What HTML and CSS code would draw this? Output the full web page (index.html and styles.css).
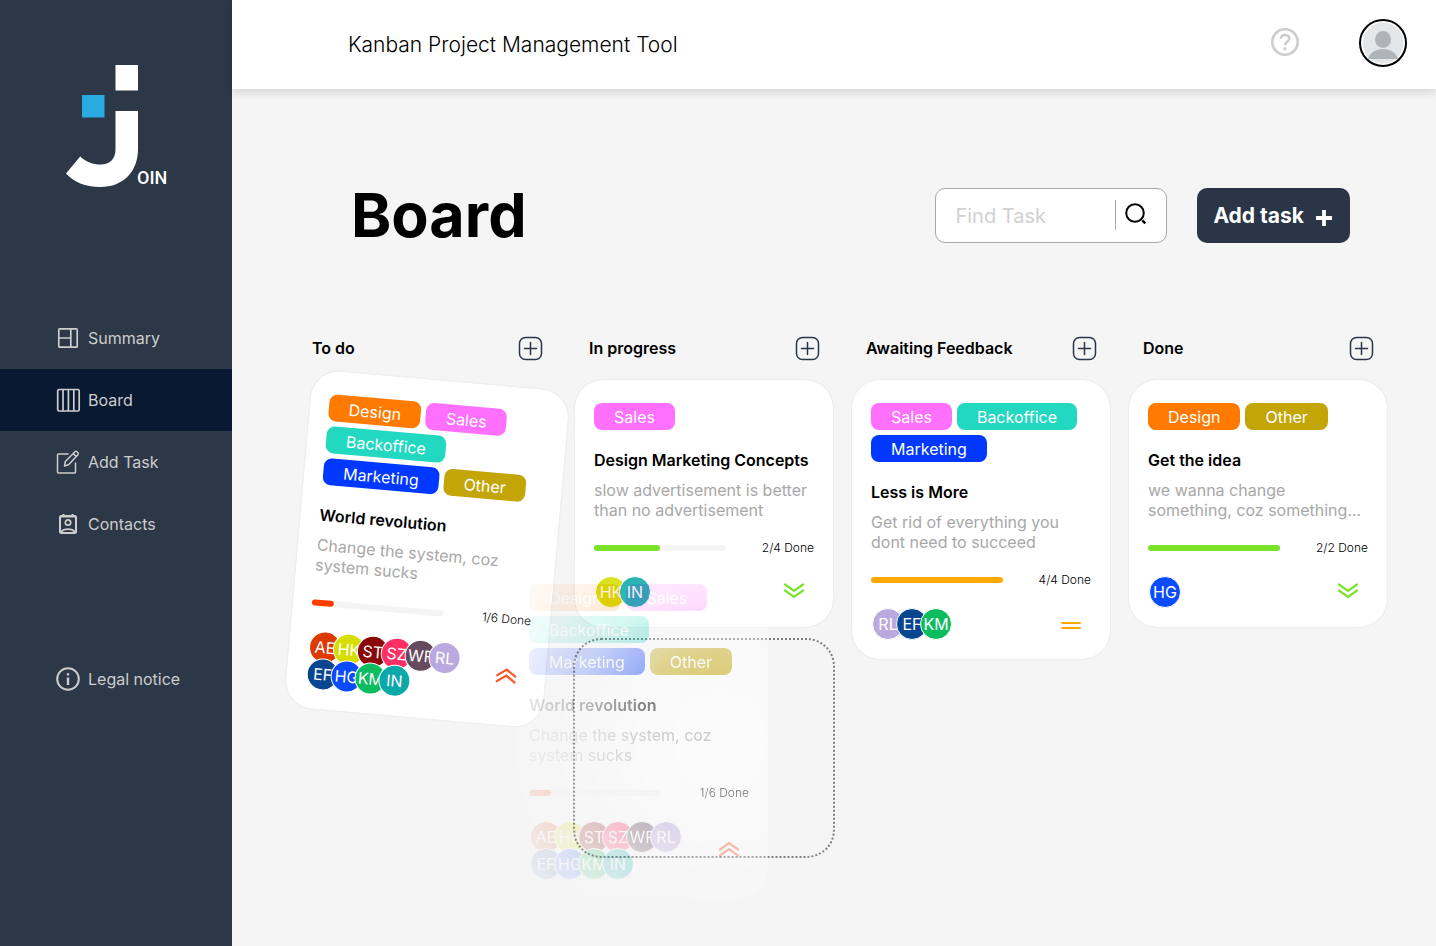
FILE: index.html
```html
<!DOCTYPE html>
<html lang="en">
<head>
  <meta charset="utf-8">
  <meta name="viewport" content="width=device-width, initial-scale=1">
  <title>Join - Board</title>
  <link rel="stylesheet" href="styles.css">
</head>
<body>
  <svg class="sprite" aria-hidden="true">
    <symbol id="icon-plus-box" viewBox="0 0 24 24"><rect x="1.500" y="1.500" width="22" height="22" rx="6" fill="none" stroke="#2a3647" stroke-width="1.500"/><path d="M12.500 6.500v12M6.500 12.500h12" fill="none" stroke="#2a3647" stroke-width="1.500" stroke-linecap="round"/></symbol>
    <symbol id="icon-urgent" viewBox="0 0 20 15"><path d="M1 7.500L10 1.200L19 7.500M1 13.500L10 7.200L19 13.500" fill="none" stroke="#ff4d1c" stroke-width="2.200" stroke-linecap="round" stroke-linejoin="round"/></symbol>
    <symbol id="icon-low" viewBox="0 0 20 15"><path d="M1 1.500L10 7.800L19 1.500M1 7.500L10 13.800L19 7.500" fill="none" stroke="#7ae229" stroke-width="2.200" stroke-linecap="round" stroke-linejoin="round"/></symbol>
    <symbol id="icon-medium" viewBox="0 0 20 15"><path d="M1 6h18M1 11h18" fill="none" stroke="#ffa800" stroke-width="2" stroke-linecap="round"/></symbol>
  </svg>

  <div class="layout">
    <aside class="sidebar">
      <a class="logo" href="#" aria-label="Join">
        <svg width="102" height="124" viewBox="0 0 102 124">
          <path fill="#fff" d="M49.500 0H72V25.500H49.500zM49.500 46H72V84C72 106 58 122 34 122C19 122 8 117 0 108.500L14.200 91.500C20 97 27 99.500 34.500 99.500C44 99.500 49.500 94 49.500 84z"/>
          <path fill="#29abe2" d="M16 30H38.500V52.500H16z"/>
          <text class="logo-text" x="71" y="119">OIN</text>
        </svg>
      </a>
      <nav class="menu" aria-label="Main">
        <a class="menu-item" href="#">
          <svg width="24" height="24" viewBox="0 0 24 24" fill="none" stroke="#cdcdcd" stroke-width="1.700"><rect x="2.800" y="2.800" width="18.400" height="18.400" rx="1"/><path d="M14.800 3v18M3 12h11.800"/></svg>
          Summary
        </a>
        <a class="menu-item menu-item-active" href="#" aria-current="page">
          <svg width="24" height="24" viewBox="0 0 24 24" fill="none" stroke="#cdcdcd" stroke-width="1.700"><rect x="1.700" y="1.500" width="21.500" height="21.500" rx="1.500"/><path d="M7 1.500v21.500M12.400 1.500v21.500M17.800 1.500v21.500"/></svg>
          Board
        </a>
        <a class="menu-item" href="#">
          <svg width="24" height="24" viewBox="0 0 24 24" fill="none" stroke="#cdcdcd" stroke-width="1.500" stroke-linecap="round" stroke-linejoin="round"><path d="M12 4H2.500Q1.500 4 1.500 5V22Q1.500 23 2.500 23H18.500Q19.500 23 19.500 22V13"/><path d="M8.500 16L9.300 11.600L19 1.700Q20 .9 21 1.800L22 2.800Q22.800 3.800 22 4.700L12.500 14.800zM17.300 3.600L20.200 6.500"/></svg>
          Add Task
        </a>
        <a class="menu-item" href="#">
          <svg width="24" height="24" viewBox="0 0 24 24" fill="none" stroke="#cdcdcd" stroke-width="2"><rect x="4" y="4" width="16" height="17" rx="1.500"/><path d="M7.500 2v2.500M16.500 2v2.500M4 4.500h16" /><circle cx="12" cy="10.500" r="2.700" stroke-width="1.700"/><path d="M5 20C8 16.300 16 16.300 19 20" stroke-width="1.800"/></svg>
          Contacts
        </a>
      </nav>
      <a class="menu-item" href="#">
        <svg width="24" height="24" viewBox="0 0 24 24" fill="none" stroke="#cdcdcd"><circle cx="12" cy="12" r="10.800" stroke-width="2"/><path d="M12 10.500V18M12 6.200V8.400" stroke-width="2.400"/></svg>
        Legal notice
      </a>
    </aside>

    <div class="content">
      <header class="topbar">
        <span class="topbar-title">Kanban Project Management Tool</span>
        <div class="topbar-actions">
          <a class="help" href="#" aria-label="Help">
            <svg width="28" height="28" viewBox="0 0 28 28" fill="none" stroke="#cdcdcd"><circle cx="14" cy="14" r="12.700" stroke-width="2.600"/><path d="M9.900 10.800C10 8 11.800 6.900 14 6.900C16.500 6.900 18.200 8.400 18.200 10.600C18.200 13.800 14 13.900 14 17.300" stroke-width="2.500"/><circle cx="14" cy="20.700" r="1.700" fill="#cdcdcd" stroke="none"/></svg>
          </a>
          <button class="profile" type="button" aria-label="Profile">
            <svg width="42" height="42" viewBox="0 0 42 42"><circle cx="21" cy="21" r="20.500" fill="#e4e6e8"/><ellipse cx="21" cy="17.500" rx="8" ry="8.500" fill="#aeb4b8"/><path fill="#aeb4b8" d="M6 37C8 30.500 14 27 21 27S34 30.500 36 37z"/></svg>
          </button>
        </div>
      </header>

      <main>
        <div class="board-head">
          <h1>Board</h1>
          <form class="search" role="search">
            <input type="text" placeholder="Find Task" aria-label="Find Task">
            <button type="button" aria-label="Search">
              <svg width="24" height="24" viewBox="0 0 24 24" fill="none" stroke="#000" stroke-width="2"><circle cx="11" cy="11" r="8.800"/><path d="M18.300 18.300L21.300 21.300" stroke-width="2.400"/></svg>
            </button>
          </form>
          <button class="add-task" type="button">
            Add task
            <svg width="16" height="16" viewBox="0 0 16 16"><path d="M8 0v16M0 8h16" stroke="#fff" stroke-width="3.800"/></svg>
          </button>
        </div>

        <div class="columns">
          <section class="column">
            <div class="column-head">
              <h2>To do</h2>
              <button type="button" aria-label="Add task to To do"><svg width="24" height="24"><use href="#icon-plus-box"/></svg></button>
            </div>
            <article class="card card-tilted">
              <div class="tags"><span class="tag design">Design</span><span class="tag sales">Sales</span><span class="tag backoffice">Backoffice</span><span class="tag marketing">Marketing</span><span class="tag other">Other</span></div>
              <h3>World revolution</h3>
              <p>Change the system, coz system sucks</p>
              <div class="progress"><div class="track"><div class="fill fill-urgent" style="width: 16.67%"></div></div><span>1/6 Done</span></div>
              <div class="card-foot">
                <div class="people"><span class="person ae">AE</span><span class="person hk">HK</span><span class="person st">ST</span><span class="person sz">SZ</span><span class="person wf">WF</span><span class="person rl">RL</span><span class="person ef">EF</span><span class="person hg">HG</span><span class="person km">KM</span><span class="person in">IN</span></div>
                <svg class="urgent" width="20" height="15"><use href="#icon-urgent"/></svg>
              </div>
            </article>
          </section>

          <section class="column">
            <div class="column-head">
              <h2>In progress</h2>
              <button type="button" aria-label="Add task to In progress"><svg width="24" height="24"><use href="#icon-plus-box"/></svg></button>
            </div>
            <article class="card">
              <div class="tags"><span class="tag sales">Sales</span></div>
              <h3>Design Marketing Concepts</h3>
              <p>slow advertisement is better than no advertisement</p>
              <div class="progress"><div class="track"><div class="fill fill-low" style="width: 50%"></div></div><span>2/4 Done</span></div>
              <div class="card-foot">
                <div class="people"><span class="person hk">HK</span><span class="person in">IN</span></div>
                <svg class="low" width="20" height="15"><use href="#icon-low"/></svg>
              </div>
            </article>
            <div class="drop-zone"></div>
            <article class="card drag-preview" aria-hidden="true">
              <div class="tags"><span class="tag design">Design</span><span class="tag sales">Sales</span><span class="tag backoffice">Backoffice</span><span class="tag marketing">Marketing</span><span class="tag other">Other</span></div>
              <h3>World revolution</h3>
              <p>Change the system, coz system sucks</p>
              <div class="progress"><div class="track"><div class="fill fill-urgent" style="width: 16.67%"></div></div><span>1/6 Done</span></div>
              <div class="card-foot">
                <div class="people"><span class="person ae">AE</span><span class="person hk">HK</span><span class="person st">ST</span><span class="person sz">SZ</span><span class="person wf">WF</span><span class="person rl">RL</span><span class="person ef">EF</span><span class="person hg">HG</span><span class="person km">KM</span><span class="person in">IN</span></div>
                <svg class="urgent" width="20" height="15"><use href="#icon-urgent"/></svg>
              </div>
            </article>
          </section>

          <section class="column">
            <div class="column-head">
              <h2>Awaiting Feedback</h2>
              <button type="button" aria-label="Add task to Awaiting Feedback"><svg width="24" height="24"><use href="#icon-plus-box"/></svg></button>
            </div>
            <article class="card">
              <div class="tags"><span class="tag sales">Sales</span><span class="tag backoffice">Backoffice</span><span class="tag marketing">Marketing</span></div>
              <h3>Less is More</h3>
              <p>Get rid of everything you dont need to succeed</p>
              <div class="progress"><div class="track"><div class="fill fill-medium" style="width: 100%"></div></div><span>4/4 Done</span></div>
              <div class="card-foot">
                <div class="people"><span class="person rl">RL</span><span class="person ef">EF</span><span class="person km">KM</span></div>
                <svg width="20" height="15"><use href="#icon-medium"/></svg>
              </div>
            </article>
          </section>

          <section class="column">
            <div class="column-head">
              <h2>Done</h2>
              <button type="button" aria-label="Add task to Done"><svg width="24" height="24"><use href="#icon-plus-box"/></svg></button>
            </div>
            <article class="card">
              <div class="tags"><span class="tag design">Design</span><span class="tag other">Other</span></div>
              <h3>Get the idea</h3>
              <p>we wanna change something, coz something...</p>
              <div class="progress"><div class="track"><div class="fill fill-low" style="width: 100%"></div></div><span>2/2 Done</span></div>
              <div class="card-foot">
                <div class="people"><span class="person hg">HG</span></div>
                <svg class="low" width="20" height="15"><use href="#icon-low"/></svg>
              </div>
            </article>
          </section>
        </div>
      </main>
    </div>
  </div>
</body>
</html>
```

FILE: styles.css
```css
* {
  box-sizing: border-box;
  margin: 0;
}

body {
  background: #f5f5f5;
  color: #000;
  font-family: Inter, sans-serif;
  font-size: 16px;
}

button,
input {
  border: 0;
  padding: 0;
  background: none;
  font: inherit;
}

button {
  cursor: pointer;
}

svg {
  display: block;
  flex: none;
  overflow: visible;
}

.sprite {
  position: absolute;
  width: 0;
  height: 0;
}

symbol {
  overflow: visible;
}

.layout {
  display: flex;
  min-height: 100vh;
}

/* Sidebar */
.sidebar {
  flex: none;
  width: 232px;
  padding-top: 65px;
  background: #2c3747;
}

.logo {
  display: block;
  width: 102px;
  margin: 0 auto 118px 66px;
}

.logo-text {
  fill: #fff;
  font: 500 18px "Liberation Sans Narrow", Roboto, sans-serif;
}

.menu {
  margin-bottom: 93px;
}

.menu-item {
  display: flex;
  align-items: center;
  gap: 8px;
  height: 62px;
  padding-left: 56px;
  color: #cdcdcd;
  text-decoration: none;
}

.menu-item-active {
  background: #091931;
}

/* Top bar */
.content {
  flex: 1;
  min-width: 0;
}

.topbar {
  display: flex;
  align-items: center;
  justify-content: space-between;
  height: 89px;
  padding: 0 29px 0 116px;
  background: #fff;
  box-shadow: 0 4px 8px rgba(0, 0, 0, 0.12);
}

.topbar-title {
  font-size: 21px;
  font-weight: 300;
}

.topbar-actions {
  display: flex;
  align-items: center;
  gap: 60px;
  padding-bottom: 4px;
}

.help {
  padding-bottom: 2px;
}

.profile {
  display: grid;
  place-items: center;
  width: 48px;
  height: 48px;
  border: 2px solid #000;
  border-radius: 50%;
}

/* Board heading */
.board-head {
  display: flex;
  align-items: center;
  gap: 30px;
  padding: 99px 86px 93px 119px;
}

h1 {
  flex: 1;
  font-size: 61px;
  line-height: 55px;
}

.search {
  display: flex;
  align-items: center;
  width: 232px;
  height: 55px;
  padding: 0 18px 0 19px;
  border: 1px solid #a8a8a8;
  border-radius: 10px;
  background: #fff;
}

.search input {
  flex: 1;
  min-width: 0;
  font-size: 20px;
}

.search input::placeholder {
  color: #d1d1d1;
}

.search button {
  height: 30px;
  margin-bottom: 1px;
  padding: 0 0 2px 8px;
  border-left: 1px solid #a8a8a8;
}

.add-task {
  display: flex;
  align-items: center;
  gap: 12px;
  height: 55px;
  padding: 0 18px 0 16px;
  border-radius: 10px;
  background: #2a3647;
  color: #fff;
  font-size: 21px;
  font-weight: 700;
}

.add-task svg {
  margin-top: 4px;
}

/* Columns */
.columns {
  display: grid;
  grid-template-columns: repeat(4, minmax(0, 1fr));
  gap: 19px;
  padding: 0 49px 40px 66px;
}

.column {
  position: relative;
}

.column-head {
  display: flex;
  align-items: center;
  justify-content: space-between;
  height: 24px;
  margin-bottom: 20px;
  padding: 0 14px;
}

h2,
h3 {
  font-size: 16px;
  font-weight: 600;
  line-height: 20px;
}

/* Cards */
.card {
  padding: 23px 19px 19px;
  border-radius: 28px;
  background: #fff;
  box-shadow: 0 0 2px rgba(0, 0, 0, 0.12);
}

.card-tilted {
  transform: rotate(5deg);
}

.tags {
  display: flex;
  flex-wrap: wrap;
  gap: 5px;
  margin-bottom: 20px;
}

.tag {
  padding: 2px 20px 0;
  border-radius: 8px;
  color: #fff;
  line-height: 25px;
}

.design { background: #ff7a00; }
.sales { background: #ff70ff; }
.backoffice { background: #22d8c0; }
.marketing { background: #0038ff; }
.other { background: #c3a507; }

.card p {
  margin: 10px 0 20px;
  color: #a8a8a8;
  line-height: 20px;
}

.progress {
  display: flex;
  align-items: center;
  justify-content: space-between;
  margin-bottom: 20px;
  font-size: 12px;
  line-height: 16px;
}

.progress span {
  font-weight: 300;
}

.track {
  width: 60%;
  height: 6px;
  border-radius: 3px;
  background: #f4f4f4;
}

.fill {
  height: 6px;
  border-radius: 3px;
}

.fill-urgent { background: #ff3d00; }
.fill-medium { background: #ffa800; }
.fill-low { background: #7ae229; }

.card-foot {
  display: flex;
  align-items: center;
  justify-content: space-between;
  padding: 0 10px 0 1px;
}

.card-foot .low {
  margin-bottom: 4px;
}

.card-foot .urgent {
  margin-bottom: 2px;
}

.people {
  display: flex;
  flex-wrap: wrap;
  width: 150px;
  padding-bottom: 5px;
}

.person {
  width: 32px;
  height: 32px;
  margin: 0 -8px -5px 0;
  border: 1px solid #fff;
  border-radius: 50%;
  color: #fff;
  line-height: 30px;
  text-align: center;
}

.ae { background: #dd3a00; }
.hk { background: #d6de00; }
.st { background: #8a0808; }
.sz { background: #ff2e63; }
.wf { background: #664a5e; }
.rl { background: #baa9de; }
.ef { background: #0a458f; }
.hg { background: #0b4bff; }
.km { background: #0dbc5f; }
.in { background: #0ba9a9; }

/* Drag and drop */
.drop-zone {
  height: 220px;
  margin: 11px -2px 0;
  border: 2px dotted #7f7f7f;
  border-radius: 28px;
}

.drag-preview {
  position: absolute;
  z-index: 2;
  top: 225px;
  left: -65px;
  width: 100%;
  pointer-events: none;
  mask-image: radial-gradient(circle at 210px 179px, rgba(0, 0, 0, 0.6) 0, rgba(0, 0, 0, 0.56) 40px, rgba(0, 0, 0, 0.46) 85px, rgba(0, 0, 0, 0.34) 112px, rgba(0, 0, 0, 0.2) 150px, rgba(0, 0, 0, 0.09) 205px, rgba(0, 0, 0, 0) 270px);
}
```
